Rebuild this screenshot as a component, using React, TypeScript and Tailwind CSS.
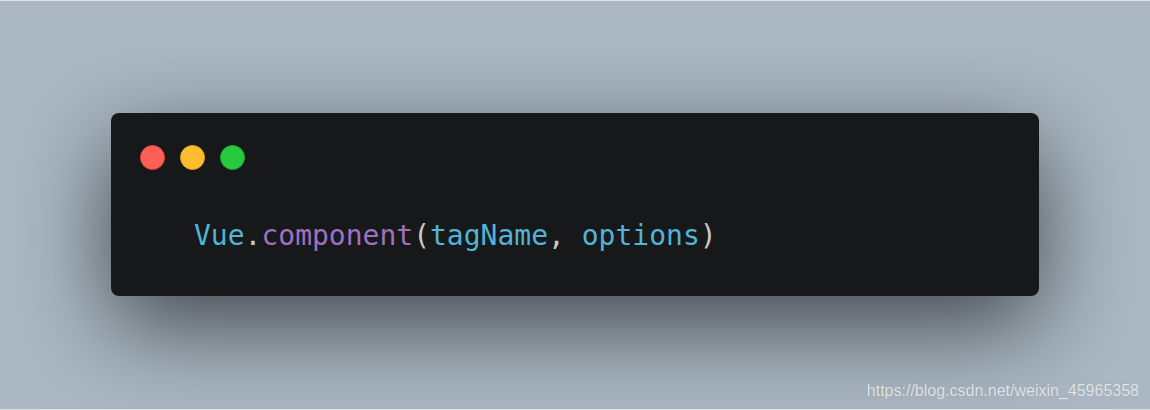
export default function App() {
  return (
    <div className="relative w-[1150px] h-[410px] overflow-hidden bg-[#abb8c3] border-y border-[#dfe3e6]">
      <div className="pt-[112px] pl-[111px]">
        <div className="w-[928px] h-[183px] rounded-[8px] bg-[#171819] shadow-[0_30px_95px_rgba(0,0,0,0.62)] pl-[29px] pt-[32px]">
          {/* window controls */}
          <div className="flex gap-[15px]">
            <span className="w-[25px] h-[25px] rounded-full bg-[#ff5f56] border border-[#e0443e]" />
            <span className="w-[25px] h-[25px] rounded-full bg-[#ffbd2e] border border-[#dea123]" />
            <span className="w-[25px] h-[25px] rounded-full bg-[#27c93f] border border-[#1aab29]" />
          </div>
          <pre className="mt-[48px] pl-[54px] text-[28px] leading-[35px] font-['DejaVu_Sans_Mono',monospace] text-[#c8c8c8]">
            <span className="text-[#4fb4d8]">Vue</span>
            <span>.</span>
            <span className="text-[#a070c0]">component</span>
            <span>(</span>
            <span className="text-[#4fb4d8]">tagName</span>
            <span>, </span>
            <span className="text-[#4fb4d8]">options</span>
            <span>)</span>
          </pre>
        </div>
      </div>
      <div className="absolute right-[11px] bottom-[9px] text-[16px] leading-[18px] text-white/75 font-['Liberation_Sans',Arial,sans-serif] [text-shadow:0_0_1px_rgba(0,0,0,0.2)]">
        https://blog.csdn.net/weixin_45965358
      </div>
    </div>
  );
}
